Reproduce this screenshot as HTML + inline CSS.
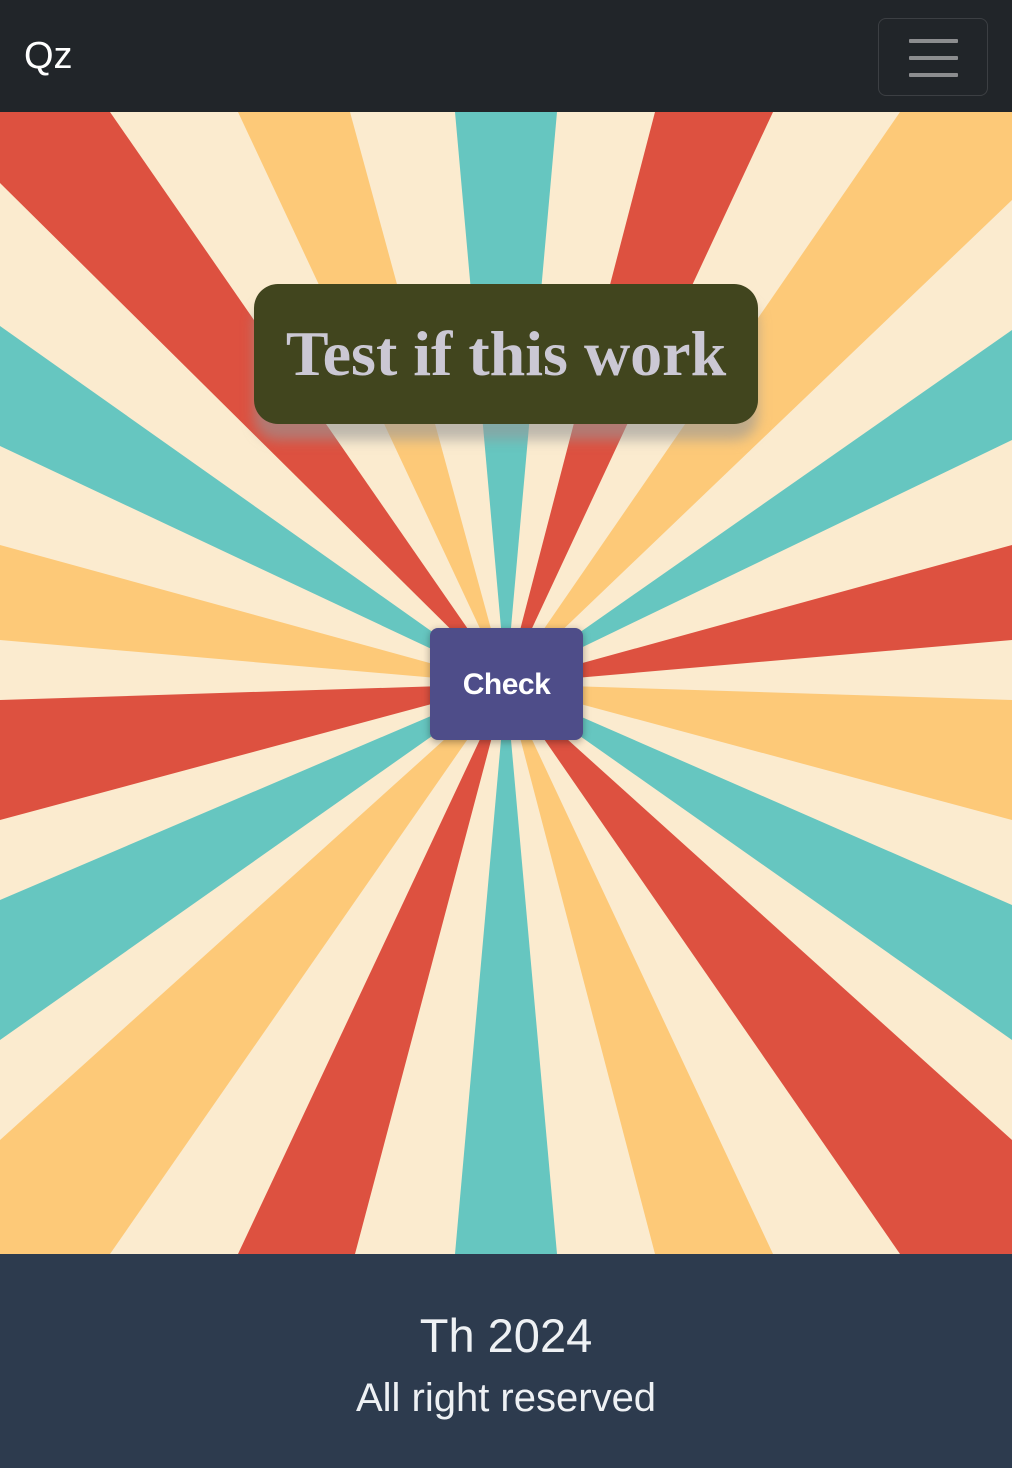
<!DOCTYPE html>
<html><head><meta charset="utf-8"><style>
*{margin:0;padding:0;box-sizing:border-box}
body{width:1012px;height:1468px;overflow:hidden;font-family:"Liberation Sans",sans-serif;background:#2d3b4e}
nav{position:absolute;left:0;top:0;width:1012px;height:112px;background:#212529}
.brand{position:absolute;left:24px;top:34px;color:#fff;font-size:38px;line-height:44px}
.tog{position:absolute;left:878px;top:18px;width:110px;height:78px;border:1px solid rgba(255,255,255,.12);border-radius:8px}
.tog i{position:absolute;left:30px;width:49px;height:4px;background:#8c8d8f;border-radius:1px}
.hero{position:absolute;left:0;top:112px;width:1012px;height:1142px;overflow:hidden}
.title{position:absolute;left:254px;top:284px;width:504px;height:140px;background:#41451e;border-radius:24px;box-shadow:0 16px 12px rgba(150,150,150,.6);color:#cbc8d4;font-family:"Liberation Serif",serif;font-weight:bold;font-size:64px;text-align:center;line-height:140px}
.btn{position:absolute;left:430px;top:628px;width:153px;height:112px;background:#4e4d89;border-radius:8px;box-shadow:0 2px 8px rgba(0,0,0,.35);color:#fff;font-weight:bold;font-size:30px;text-align:center;line-height:114px;letter-spacing:-0.5px}
footer{position:absolute;left:0;top:1254px;width:1012px;height:214px;background:#2d3b4e;color:#eef1f4;text-align:center}
.f1{position:absolute;left:0;width:100%;top:54px;font-size:47px;line-height:56px}
.f2{position:absolute;left:0;width:100%;top:121px;font-size:40px;line-height:46px}
</style></head><body>
<nav><div class="brand">Qz</div><div class="tog"><i style="top:20px"></i><i style="top:37px"></i><i style="top:54px"></i></div></nav>
<div class="hero">
<svg width="1012" height="1142" viewBox="0 112 1012 1142" style="position:absolute;left:0;top:0">
<rect x="0" y="112" width="1012" height="1142" fill="#fbebcf"/>
<g>
<polygon fill="#dd5140" points="506,684 0,183 0,112 110,112"/>
<polygon fill="#fdc978" points="506,684 238,112 350,112"/>
<polygon fill="#66c6c0" points="506,684 455,112 557,112"/>
<polygon fill="#dd5140" points="506,684 655,112 773,112"/>
<polygon fill="#fdc978" points="506,684 900,112 1012,112 1012,200"/>
<polygon fill="#66c6c0" points="506,684 1012,330 1012,440"/>
<polygon fill="#dd5140" points="506,684 1012,545 1012,640"/>
<polygon fill="#fdc978" points="506,684 1012,700 1012,820"/>
<polygon fill="#66c6c0" points="506,684 1012,905 1012,1040"/>
<polygon fill="#dd5140" points="506,684 1012,1140 1012,1254 900,1254"/>
<polygon fill="#fdc978" points="506,684 773,1254 655,1254"/>
<polygon fill="#66c6c0" points="506,684 557,1254 455,1254"/>
<polygon fill="#dd5140" points="506,684 355,1254 238,1254"/>
<polygon fill="#fdc978" points="506,684 110,1254 0,1254 0,1140"/>
<polygon fill="#66c6c0" points="506,684 0,1040 0,900"/>
<polygon fill="#dd5140" points="506,684 0,820 0,700"/>
<polygon fill="#fdc978" points="506,684 0,640 0,545"/>
<polygon fill="#66c6c0" points="506,684 0,446 0,326"/>
</g>
</svg>
</div>
<div class="title">Test if this work</div>
<div class="btn">Check</div>
<footer><div class="f1">Th 2024</div><div class="f2">All right reserved</div></footer>
</body></html>
